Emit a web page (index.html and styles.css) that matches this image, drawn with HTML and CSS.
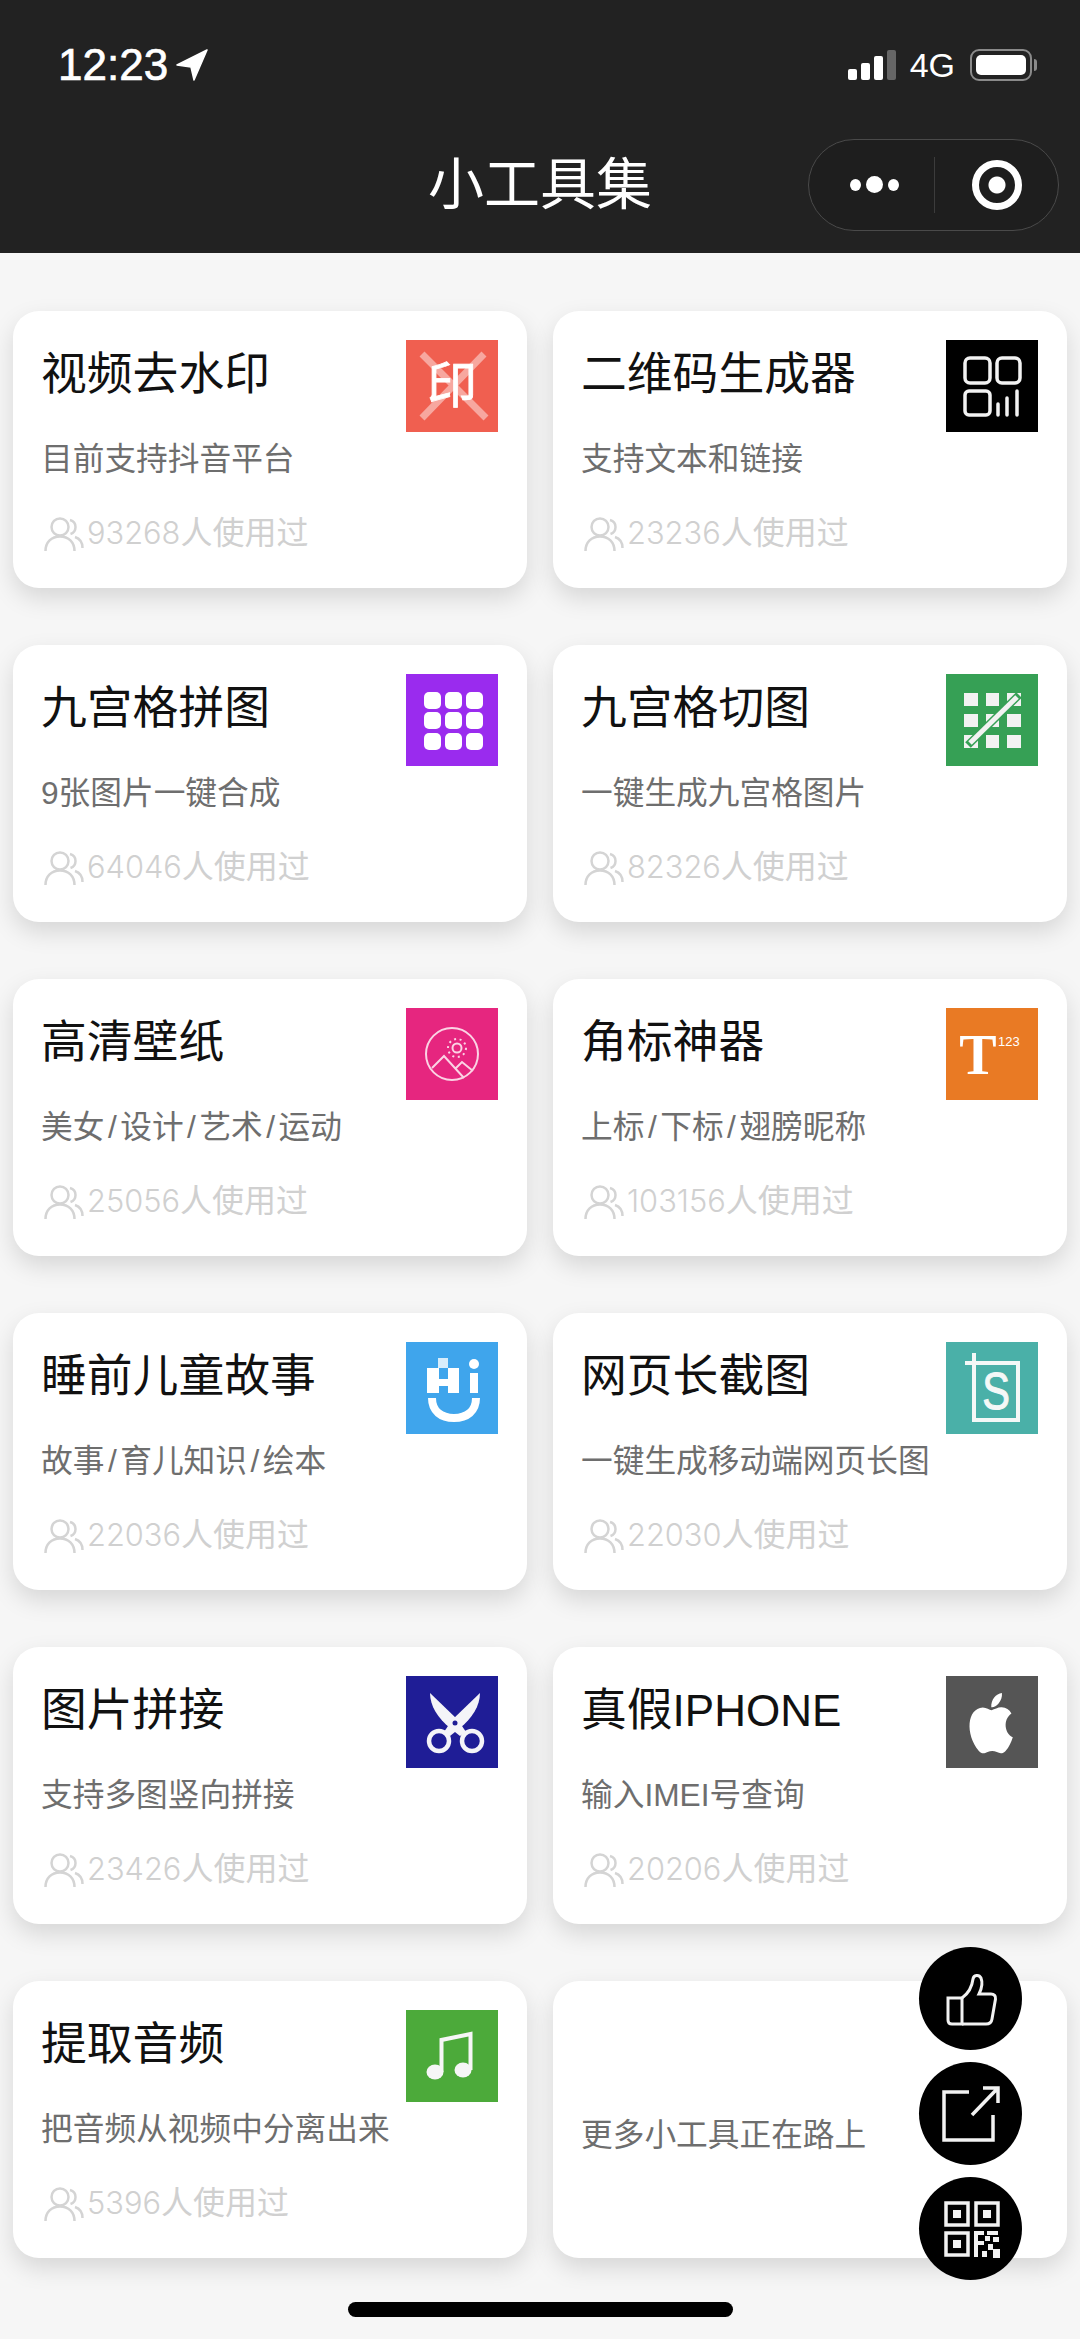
FILE: index.html
```html
<!DOCTYPE html>
<html lang="zh-CN">
<head>
  <meta charset="UTF-8">
  <meta name="viewport" content="width=device-width, initial-scale=1.0">
  <title>小工具集</title>
  <link rel="stylesheet" href="styles.css">
</head>
<body>
  <svg class="defs" width="0" height="0" aria-hidden="true">
    <symbol id="people" viewBox="0 0 40 36">
      <circle cx="16" cy="10" r="8.5"/>
      <path d="M1.5 34c0-9 6-14.500 14.500-14.500S30.500 25 30.500 34"/>
      <path d="M26 3c3.500 1 5.500 3.800 5.500 7s-2 6-5 7M31 20c4.500 1.500 7.500 5.500 7.500 11"/>
    </symbol>
  </svg>

  <!-- 顶部 -->
  <header class="top">
    <div class="status">
      <div class="status-time">
        <span>12:23</span>
        <svg width="32" height="32" viewBox="0 0 32 32"><path d="M31 1 1 16l14 2 3 13z" fill="#fff" stroke="#fff" stroke-width="1.500" stroke-linejoin="round"/></svg>
      </div>
      <div class="status-right">
        <div class="signal"><i></i><i></i><i></i><i></i></div>
        <span class="net">4G</span>
        <div class="battery"><b></b></div>
      </div>
    </div>
    <nav class="nav">
      <span></span>
      <h1>小工具集</h1>
      <div class="capsule">
        <div class="capsule-dots"><i></i><i class="big"></i><i></i></div>
        <div class="capsule-ring"></div>
      </div>
    </nav>
  </header>

  <!-- 工具列表 -->
  <main class="grid">
    <a class="card">
      <div class="card-body">
        <h2>视频去水印</h2>
        <p class="desc">目前支持抖音平台</p>
        <p class="count"><svg class="people"><use href="#people"/></svg><span class="num">93268</span>人使用过</p>
      </div>
      <div class="icon red">
        <svg viewBox="0 0 92 92"><path d="M16 14 80 78M78 14 16 78" stroke="#fff" stroke-opacity=".45" stroke-width="7" fill="none"/><text x="46" y="63" class="glyph">印</text></svg>
      </div>
    </a>

    <a class="card">
      <div class="card-body">
        <h2>二维码生成器</h2>
        <p class="desc">支持文本和链接</p>
        <p class="count"><svg class="people"><use href="#people"/></svg><span class="num">23236</span>人使用过</p>
      </div>
      <div class="icon black">
        <svg viewBox="0 0 92 92" fill="none" stroke="#f2f2f2" stroke-width="3.500" stroke-linecap="round">
          <rect x="19" y="18" width="25" height="25" rx="5"/>
          <rect x="51" y="18" width="23" height="25" rx="5"/>
          <rect x="19" y="51" width="25" height="24" rx="4"/>
          <path d="M52 64v11M61 58v17M71 51v24"/>
        </svg>
      </div>
    </a>

    <a class="card">
      <div class="card-body">
        <h2>九宫格拼图</h2>
        <p class="desc">9张图片一键合成</p>
        <p class="count"><svg class="people"><use href="#people"/></svg><span class="num">64046</span>人使用过</p>
      </div>
      <div class="icon purple">
        <svg viewBox="0 0 92 92" fill="#fff">
          <rect x="18" y="18" width="17" height="17" rx="5"/><rect x="39" y="18" width="17" height="17" rx="5"/><rect x="60" y="18" width="17" height="17" rx="5"/>
          <rect x="18" y="38" width="17" height="17" rx="5"/><rect x="39" y="38" width="17" height="17" rx="5"/><rect x="60" y="38" width="17" height="17" rx="5"/>
          <rect x="18" y="59" width="17" height="17" rx="5"/><rect x="39" y="59" width="17" height="17" rx="5"/><rect x="60" y="59" width="17" height="17" rx="5"/>
        </svg>
      </div>
    </a>

    <a class="card">
      <div class="card-body">
        <h2>九宫格切图</h2>
        <p class="desc">一键生成九宫格图片</p>
        <p class="count"><svg class="people"><use href="#people"/></svg><span class="num">82326</span>人使用过</p>
      </div>
      <div class="icon green">
        <svg viewBox="0 0 92 92" fill="#f2f2f2">
          <rect x="18" y="19" width="14" height="13"/><rect x="40" y="19" width="13" height="13"/><rect x="61" y="19" width="14" height="13"/>
          <rect x="18" y="40" width="14" height="13"/><rect x="40" y="40" width="13" height="13"/><rect x="61" y="40" width="14" height="13"/>
          <rect x="18" y="61" width="14" height="13"/><rect x="40" y="61" width="13" height="13"/><rect x="61" y="61" width="14" height="13"/>
          <path d="M22 71 73 21" stroke="#36a055" stroke-width="8" fill="none"/>
          <path d="M24 69 71 23" stroke="#f2f2f2" stroke-width="5" fill="none"/>
        </svg>
      </div>
    </a>

    <a class="card">
      <div class="card-body">
        <h2>高清壁纸</h2>
        <p class="desc">美女<span class="slash">/</span>设计<span class="slash">/</span>艺术<span class="slash">/</span>运动</p>
        <p class="count"><svg class="people"><use href="#people"/></svg><span class="num">25056</span>人使用过</p>
      </div>
      <div class="icon pink">
        <svg viewBox="0 0 92 92" fill="none" stroke="#fbd3e4" stroke-width="2">
          <circle cx="46" cy="46" r="26"/>
          <circle cx="51" cy="40" r="4.500"/>
          <circle cx="51" cy="40" r="9" stroke-dasharray="2 3.600"/>
          <path d="M26 60 38 48 58 70M50 60 56 54 67 63"/>
        </svg>
      </div>
    </a>

    <a class="card">
      <div class="card-body">
        <h2>角标神器</h2>
        <p class="desc">上标<span class="slash">/</span>下标<span class="slash">/</span>翅膀昵称</p>
        <p class="count"><svg class="people"><use href="#people"/></svg><span class="num">103156</span>人使用过</p>
      </div>
      <div class="icon orange">
        <svg viewBox="0 0 92 92"><text x="32" y="66" class="serif-t">T</text><text x="52" y="38" class="sup">123</text></svg>
      </div>
    </a>

    <a class="card">
      <div class="card-body">
        <h2>睡前儿童故事</h2>
        <p class="desc">故事<span class="slash">/</span>育儿知识<span class="slash">/</span>绘本</p>
        <p class="count"><svg class="people"><use href="#people"/></svg><span class="num">22036</span>人使用过</p>
      </div>
      <div class="icon blue">
        <svg viewBox="0 0 92 92" fill="#fff">
          <path d="M21 26H33V37H42V26H53V51H42V44H33V51H21z"/>
          <rect x="32" y="16" width="10" height="10" opacity=".8"/>
          <circle cx="68" cy="22" r="5"/>
          <rect x="64" y="31" width="8" height="20"/>
          <path d="M26 56c0 13 9 20 22 20s22-7 22-20" fill="none" stroke="#fff" stroke-width="8"/>
        </svg>
      </div>
    </a>

    <a class="card">
      <div class="card-body">
        <h2>网页长截图</h2>
        <p class="desc">一键生成移动端网页长图</p>
        <p class="count"><svg class="people"><use href="#people"/></svg><span class="num">22030</span>人使用过</p>
      </div>
      <div class="icon teal">
        <svg viewBox="0 0 92 92">
          <path d="M19 21H72V78H28V11" fill="none" stroke="#f4f8f7" stroke-width="4"/>
          <text transform="translate(50 67) scale(.8 1)" class="letter-s">S</text>
        </svg>
      </div>
    </a>

    <a class="card">
      <div class="card-body">
        <h2>图片拼接</h2>
        <p class="desc">支持多图竖向拼接</p>
        <p class="count"><svg class="people"><use href="#people"/></svg><span class="num">23426</span>人使用过</p>
      </div>
      <div class="icon navy">
        <svg viewBox="0 0 92 92">
          <path d="M24 17 52 44 60 56 54 60 44 52C32 42 24 30 24 17Z" fill="#f4f4f8"/>
          <path d="M74 17 46 44 38 56 44 60 54 52C66 42 74 30 74 17Z" fill="#f4f4f8"/>
          <circle cx="49" cy="47" r="2.500" fill="#1f1d96"/>
          <circle cx="33" cy="65" r="10" fill="#1f1d96" stroke="#f4f4f8" stroke-width="4.500"/>
          <circle cx="66" cy="65" r="10" fill="#1f1d96" stroke="#f4f4f8" stroke-width="4.500"/>
        </svg>
      </div>
    </a>

    <a class="card">
      <div class="card-body">
        <h2>真假<span class="latin">IPHONE</span></h2>
        <p class="desc">输入IMEI号查询</p>
        <p class="count"><svg class="people"><use href="#people"/></svg><span class="num">20206</span>人使用过</p>
      </div>
      <div class="icon gray">
        <svg viewBox="0 0 92 92"><path transform="translate(11 7) scale(2.850 3.350)" fill="#fff" d="M17.050 20.280c-.98.95-2.050.8-3.080.35-1.090-.46-2.090-.48-3.240 0-1.440.62-2.200.44-3.060-.35C2.790 15.250 3.510 7.590 9.050 7.310c1.350.07 2.290.74 3.080.8 1.180-.24 2.310-.93 3.570-.84 1.510.12 2.650.72 3.400 1.800-3.120 1.870-2.380 5.980.48 7.130-.57 1.500-1.310 2.990-2.540 4.090zM12.030 7.250c-.15-2.230 1.660-4.070 3.740-4.250.29 2.580-2.340 4.500-3.740 4.250z"/></svg>
      </div>
    </a>

    <a class="card">
      <div class="card-body">
        <h2>提取音频</h2>
        <p class="desc">把音频从视频中分离出来</p>
        <p class="count"><svg class="people"><use href="#people"/></svg><span class="num">5396</span>人使用过</p>
      </div>
      <div class="icon lime">
        <svg viewBox="0 0 92 92" fill="#f6f6f6">
          <ellipse cx="29" cy="62" rx="8.500" ry="7.500"/>
          <ellipse cx="57" cy="60" rx="8.500" ry="7.500"/>
          <path d="M35.500 62V30L64.500 24V60" fill="none" stroke="#f6f6f6" stroke-width="4"/>
        </svg>
      </div>
    </a>

    <a class="card card-more">
      <p class="desc">更多小工具正在路上</p>
    </a>
  </main>

  <!-- 悬浮按钮 -->
  <div class="fabs">
    <button class="fab">
      <svg viewBox="0 0 103 103" fill="none" stroke="#f2f2f2" stroke-width="3">
        <path d="M29 51H43V77H33C30.500 77 29 75.500 29 73Z"/>
        <path d="M43 51C50 46 53 40 54 32C54.500 28 60 27 62 31C64 36 62 43 60 47H72C75 47 77 49 76.500 52L73 72C72.500 75.500 70 77 67 77H43"/>
      </svg>
    </button>
    <button class="fab">
      <svg viewBox="0 0 103 103" fill="none" stroke="#f2f2f2" stroke-width="3.500">
        <path d="M50 30H25V78H74V53"/>
        <path d="M53 53 78 27M64 26H79V41"/>
      </svg>
    </button>
    <button class="fab">
      <svg viewBox="0 0 103 103" fill="none" stroke="#f2f2f2" stroke-width="3.500">
        <rect x="27" y="26" width="22" height="22"/><rect x="57" y="26" width="22" height="22"/><rect x="27" y="56" width="22" height="22"/>
        <g fill="#f2f2f2" stroke="none">
          <rect x="34" y="33" width="8" height="8"/><rect x="64" y="33" width="8" height="8"/><rect x="34" y="63" width="8" height="8"/>
          <rect x="55" y="54" width="4" height="26"/><rect x="59" y="54" width="6" height="4"/><rect x="59" y="64" width="6" height="4"/>
          <rect x="68" y="54" width="11" height="4"/><rect x="66" y="59" width="5" height="5"/><rect x="74" y="60" width="6" height="5"/>
          <rect x="69" y="67" width="5" height="6"/><rect x="74" y="72" width="7" height="9"/><rect x="63" y="74" width="5" height="6"/>
        </g>
      </svg>
    </button>
  </div>

  <div class="home-bar"></div>
</body>
</html>
```

FILE: styles.css
```css
/* 基本样式 */
* {
  margin: 0;
  padding: 0;
  box-sizing: border-box;
}
body {
  position: relative;
  width: 1080px;
  height: 2339px;
  overflow: hidden;
  background: #f6f6f6;
  font-family: "Liberation Sans", "Noto Sans CJK SC", sans-serif;
}
.defs {
  position: absolute;
}

/* 顶部状态栏与导航 */
.top {
  height: 253px;
  background: #222;
  color: #fff;
}
.status {
  height: 130px;
  padding: 0 48px 0 58px;
  display: flex;
  align-items: center;
  justify-content: space-between;
}
.status-time {
  display: flex;
  align-items: center;
  gap: 8px;
  font-size: 44px;
  -webkit-text-stroke: .7px #fff;
}
.status-right {
  display: flex;
  align-items: center;
}
.signal {
  display: flex;
  align-items: flex-end;
  gap: 4px;
  height: 30px;
}
.signal i {
  width: 9px;
  border-radius: 2px;
  background: #fff;
}
.signal i:nth-child(1) { height: 11px; }
.signal i:nth-child(2) { height: 17px; }
.signal i:nth-child(3) { height: 24px; }
.signal i:nth-child(4) { height: 30px; background: #666; }
.net {
  margin: 0 15px 0 14px;
  font-size: 34px;
}
.battery {
  position: relative;
  width: 62px;
  height: 32px;
  padding: 4px;
  border: 2px solid #8a8a8a;
  border-radius: 9px;
}
.battery b {
  display: block;
  height: 100%;
  border-radius: 5px;
  background: #fff;
}
.battery::after {
  content: "";
  position: absolute;
  right: -7px;
  top: 8px;
  width: 3px;
  height: 12px;
  border-radius: 0 3px 3px 0;
  background: #8a8a8a;
}
.nav {
  height: 123px;
  padding: 0 21px 14px;
  display: grid;
  grid-template-columns: 1fr auto 1fr;
  align-items: center;
}
.nav h1 {
  margin-bottom: 10px;
  font-size: 56px;
  font-weight: 400;
}
.capsule {
  justify-self: end;
  width: 251px;
  height: 92px;
  display: flex;
  align-items: center;
  border: 1px solid #4a4a4a;
  border-radius: 46px;
  background: #1e1e1e;
}
.capsule-dots {
  width: 126px;
  height: 56px;
  padding-left: 6px;
  display: flex;
  align-items: center;
  justify-content: center;
  gap: 5px;
  border-right: 1px solid #3c3c3c;
}
.capsule-dots i {
  width: 11px;
  height: 12px;
  border-radius: 50%;
  background: #fff;
}
.capsule-dots i.big {
  width: 17px;
  height: 17px;
}
.capsule-ring {
  width: 50px;
  height: 50px;
  margin-left: 37px;
  border: 7px solid #fff;
  border-radius: 50%;
  background: radial-gradient(circle, #fff 0 8px, transparent 9px);
}

/* 工具卡片 */
.grid {
  padding: 58px 13px 0;
  display: grid;
  grid-template-columns: 1fr 1fr;
  grid-auto-rows: 277px;
  column-gap: 26px;
  row-gap: 57px;
}
.card {
  display: flex;
  justify-content: space-between;
  padding: 29px 29px 29px 28px;
  border-radius: 26px;
  background: #fff;
  box-shadow: 0 10px 24px rgba(0, 0, 0, .13);
}
.card h2 {
  margin-top: 2px;
  font-size: 45.8px;
  font-weight: 400;
  line-height: 66px;
  color: #111;
}
.latin {
  font-size: 44px;
}
.desc {
  margin-top: 25px;
  font-size: 31.7px;
  line-height: 52px;
  color: #6e6e6e;
}
.slash {
  padding: 0 3.5px;
}
.count {
  margin-top: 23px;
  display: flex;
  align-items: center;
  font-size: 32px;
  line-height: 50px;
  color: #d0d0d0;
}
.num {
  font-family: Inter, "Liberation Sans", sans-serif;
  font-size: 30.8px;
  font-weight: 300;
}
.people {
  width: 40px;
  height: 36px;
  margin: 4px 3px 0 3px;
  fill: none;
  stroke: #d4d4d4;
  stroke-width: 2.500;
}
.card-more {
  align-items: center;
  padding-top: 59px;
}
.card-more .desc {
  margin-top: 0;
}

/* 卡片图标 */
.icon {
  flex: none;
  width: 92px;
  height: 92px;
}
.icon svg {
  display: block;
  width: 92px;
  height: 92px;
}
.red { background: #f05f50; }
.black { background: #000; }
.purple { background: #9a2bee; }
.green { background: #36a055; }
.pink { background: #e6267f; }
.orange { background: #e97a24; }
.blue { background: #3fa5ec; }
.teal { background: #4ab0a8; }
.navy { background: #1f1d96; }
.gray { background: #555; }
.lime { background: #4caa3a; }
.glyph {
  font-size: 50px;
  fill: #fff;
  stroke: #fff;
  stroke-width: .8;
  text-anchor: middle;
}
.serif-t {
  font-family: "Liberation Serif", serif;
  font-size: 56px;
  font-weight: 700;
  fill: #fff;
  text-anchor: middle;
}
.sup {
  font-size: 13px;
  fill: #fff;
}
.letter-s {
  font-size: 52px;
  fill: #f4f8f7;
  stroke: #f4f8f7;
  stroke-width: 1;
  text-anchor: middle;
}

/* 悬浮按钮 */
.fabs {
  position: absolute;
  top: 1947px;
  left: 919px;
  display: flex;
  flex-direction: column;
  gap: 12px;
}
.fab {
  width: 103px;
  height: 103px;
  border: none;
  border-radius: 50%;
  background: #000;
}
.fab svg {
  display: block;
  width: 103px;
  height: 103px;
}

/* 底部横条 */
.home-bar {
  position: absolute;
  left: 348px;
  top: 2302px;
  width: 385px;
  height: 15px;
  border-radius: 8px;
  background: #000;
}
```
